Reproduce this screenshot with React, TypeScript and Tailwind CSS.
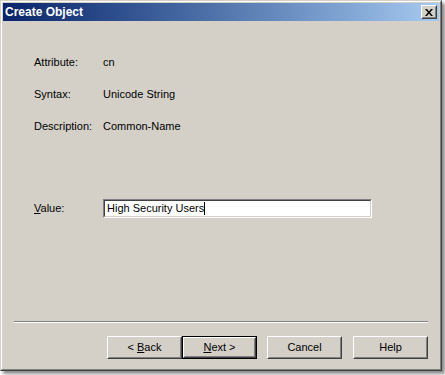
function Btn({ children, isDefault = false }: { children: React.ReactNode; isDefault?: boolean }) {
  return (
    <div className={`w-[75px] h-[23px] ${isDefault ? 'border border-black' : ''}`}>
      <div className="h-full border border-t-white border-l-white border-r-[#404040] border-b-[#404040]">
        <div className="h-full border border-t-[#d4d0c8] border-l-[#d4d0c8] border-r-[#808080] border-b-[#808080] flex items-center justify-center text-[11px] text-black">
          {children}
        </div>
      </div>
    </div>
  )
}

export default function App() {
  return (
    <div className="w-[445px] h-[375px] bg-white font-['Liberation_Sans',Arial,sans-serif] text-[11px] leading-[13px] text-black">
      {/* window frame */}
      <div className="w-[442px] h-[371px] border border-t-[#d4d0c8] border-l-[#d4d0c8] border-r-[#404040] border-b-[#404040] shadow-[3px_3px_3px_rgba(0,0,0,0.45)]">
        <div className="h-full border border-t-white border-l-white border-r-[#808080] border-b-[#808080] bg-[#d4d0c8] p-px flex flex-col">
          {/* title bar */}
          <div className="h-[18px] flex items-center justify-between bg-gradient-to-r from-[#0a246a] to-[#a6caf0] pl-[2px] pr-[2px]">
            <span className="text-white font-bold text-[12px] leading-[14px]">Create Object</span>
            <div className="w-[16px] h-[14px] bg-[#d4d0c8] border border-t-white border-l-white border-r-[#404040] border-b-[#404040]">
              <div className="h-full border border-t-[#d4d0c8] border-l-[#d4d0c8] border-r-[#808080] border-b-[#808080] flex items-center justify-center">
                <svg width="8" height="7" viewBox="0 0 8 7">
                  <path d="M0 0h2l2 2.5L6 0h2L5 3.5 8 7H6L4 4.5 2 7H0l3-3.5z" fill="#000" />
                </svg>
              </div>
            </div>
          </div>

          {/* attribute info */}
          <div className="pl-[31px] mt-[35px] flex flex-col gap-[19px]">
            <div className="flex"><span className="w-[69px]">Attribute:</span><span>cn</span></div>
            <div className="flex"><span className="w-[69px]">Syntax:</span><span>Unicode String</span></div>
            <div className="flex"><span className="w-[69px]">Description:</span><span>Common-Name</span></div>
          </div>

          {/* value */}
          <div className="pl-[31px] mt-[66px] flex items-center">
            <span className="w-[69px]"><u>V</u>alue:</span>
            <div className="w-[269px] h-[19px] border border-t-[#808080] border-l-[#808080] border-r-white border-b-white">
              <div className="h-full bg-white border border-t-[#404040] border-l-[#404040] border-r-[#d4d0c8] border-b-[#d4d0c8] flex items-center pl-[2px]">
                <span>High Security Users</span>
                <span className="w-px h-[13px] bg-black" />
              </div>
            </div>
          </div>

          {/* separator */}
          <div className="ml-[11px] w-[414px] h-[2px] mt-[103px] border-t border-t-[#808080] border-b border-b-white" />

          {/* buttons */}
          <div className="mt-[13px] pl-[104px] flex">
            <Btn><span>&lt; <u>B</u>ack</span></Btn>
            <Btn isDefault><span><u>N</u>ext &gt;</span></Btn>
            <div className="ml-[10px]"><Btn>Cancel</Btn></div>
            <div className="ml-[11px]"><Btn>Help</Btn></div>
          </div>
        </div>
      </div>
    </div>
  )
}
